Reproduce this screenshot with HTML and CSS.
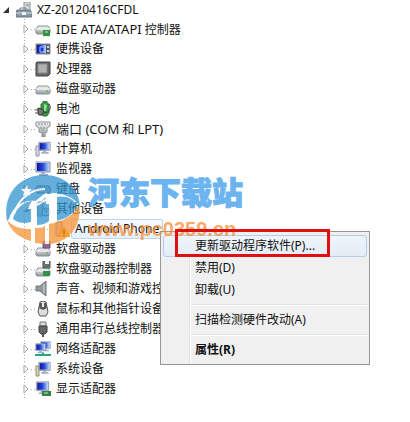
FILE: index.html
```html
<!DOCTYPE html>
<html lang="zh-CN">
<head>
    <meta charset="utf-8">
    <title>设备管理器</title>
    <link rel="stylesheet" href="styles.css">
</head>
<body>
    <svg class="defs" width="0" height="0" aria-hidden="true">
        <defs>
            <linearGradient id="metal" x2="0" y2="1"><stop stop-color="#f4f5f5"/><stop offset="1" stop-color="#929b9f"/></linearGradient>
            <linearGradient id="screen"><stop stop-color="#0718a0"/><stop offset=".5" stop-color="#2948d8"/><stop offset="1" stop-color="#b8d8ff"/></linearGradient>
            <symbol id="monitor" viewBox="0 0 16 16">
                <path d="M1 1h14v10H1z" fill="#c8ccdc" stroke="#8c93a9"/>
                <path d="M2 2h12v8H2z" fill="url(#screen)"/>
                <path d="M6 11h4v2h3v2H4v-2h2z" fill="#a7adc2"/>
            </symbol>
            <symbol id="drive" viewBox="0 0 16 16">
                <path d="M3 5h10l2 3v4l-1 1H2l-1-1V8z" fill="url(#metal)" stroke="#8b9295"/>
                <path d="M1 8h14" stroke="#fff"/>
                <path d="M11 9h2v2h-2z" fill="#74bd64"/>
            </symbol>
            <symbol id="arrow" viewBox="0 0 8 10">
                <path d="M2 1l4 4-4 4z" fill="#fff" stroke="#a5a5a5"/>
            </symbol>
        </defs>
    </svg>

    <main class="manager">
        <div class="node root">
            <svg class="arrow" viewBox="0 0 8 10"><path d="M7 2v6H1z" fill="#333"/></svg>
            <svg class="icon" viewBox="0 0 16 16"><path d="M8 0h6v10H8z" fill="#d5dadd" stroke="#8d989f"/><path d="M10 3h3" stroke="#6c7c85"/><path d="M1 8h13l2 3v4H0v-4z" fill="#8998a3" stroke="#697780"/><path d="M4 8V6h6v2" fill="none" stroke="#7b858b"/><path d="M0 11h16" stroke="#d1dde3"/><path d="M6 10h4v3H6z" fill="#eef1f2"/></svg>
            <span class="label">XZ-20120416CFDL</span>
        </div>
        <ul class="tree">
            <li class="node"><svg class="arrow"><use href="#arrow"/></svg><svg class="icon" viewBox="0 0 16 16"><use href="#drive"/><path d="M8 9h7v6H8z" fill="#329343"/><path d="M10 11h3M9 15v1m3-1v1m2-1v1" stroke="#c8e0c7"/></svg><span class="label"><span class="latin">IDE ATA/ATAPI</span> 控制器</span></li>
            <li class="node"><svg class="arrow"><use href="#arrow"/></svg><svg class="icon" viewBox="0 0 16 16"><path d="M1 3h14v10H1z" fill="#525461" stroke="#8b8c98"/><path d="M2 4h9v8H2z" fill="url(#screen)"/><path d="M5 6h4v5H5z" fill="#1430d4" stroke="#a5c6ff"/><path d="M12 5h2v2h-2zm0 4h2v2h-2z" fill="#d8d9e1"/></svg><span class="label">便携设备</span></li>
            <li class="node"><svg class="arrow"><use href="#arrow"/></svg><svg class="icon" viewBox="0 0 16 16"><path d="M1 2l1-1h13v12l-2 2H1z" fill="#666" stroke="#444"/><path d="M3 3h9v9H3z" fill="#b2b2b2" stroke="#8a8a8a"/></svg><span class="label">处理器</span></li>
            <li class="node"><svg class="arrow"><use href="#arrow"/></svg><svg class="icon"><use href="#drive"/></svg><span class="label">磁盘驱动器</span></li>
            <li class="node"><svg class="arrow"><use href="#arrow"/></svg><svg class="icon" viewBox="0 0 16 16"><path d="M6 3l2-1V0h4v2l2 1v9l-2 3H8l-2-2z" fill="#2e9b42" stroke="#466c46"/><path d="M9 3l3 1-1 6H9z" fill="#9bdc91"/><path d="M0 9h4M0 12h4" stroke="#555"/><path d="M3 7l4 1 2 2-2 4H4L3 12z" fill="#777" stroke="#333"/><path d="M14 3q3 4-1 8l-4 1" fill="none" stroke="#444"/></svg><span class="label">电池</span></li>
            <li class="node"><svg class="arrow"><use href="#arrow"/></svg><svg class="icon" viewBox="0 0 16 16"><path d="M1 1h14v4l-3 2v4l-2 1v4H7v-4l-3-1V7L1 5z" fill="url(#metal)" stroke="#899197"/><path d="M3 3h10M5 7h6M8 8v4" stroke="#7c8489" stroke-dasharray="2 1"/></svg><span class="label"><span class="latin">端口 (COM</span> 和 <span class="latin">LPT)</span></span></li>
            <li class="node"><svg class="arrow"><use href="#arrow"/></svg><svg class="icon" viewBox="0 0 16 16"><path d="M1 5h3v10H1z" fill="#dcdde5" stroke="#8d91a1"/><use href="#monitor" x="3" width="13" height="14"/></svg><span class="label">计算机</span></li>
            <li class="node"><svg class="arrow"><use href="#arrow"/></svg><svg class="icon"><use href="#monitor"/></svg><span class="label">监视器</span></li>
            <li class="node"><svg class="arrow"><use href="#arrow"/></svg><svg class="icon" viewBox="0 0 16 16"><path d="M2 5h12l2 3-2 4H2L0 8z" fill="#ccc" stroke="#555"/><path d="M3 7h11M2 9h12" stroke="#555" stroke-dasharray="1 1"/></svg><span class="label">键盘</span></li>
            <li class="node"><svg class="arrow" viewBox="0 0 8 10"><path d="M7 2v6H1z" fill="#888"/></svg><svg class="icon" viewBox="0 0 16 16"><path d="M2 1h6v14H2z" fill="#c6cdd0" stroke="#6d7880"/><circle cx="11" cy="11" r="4" fill="#f4f4f4" stroke="#777"/><path d="M9 10q2-2 3 0l-1 2m0 1v1" fill="none" stroke="#456"/></svg><span class="label">其他设备</span></li>
            <li class="node child"><svg class="icon" viewBox="0 0 16 16"><path d="M2 1h6v14H2z" fill="#d3d2c6" stroke="#858477"/><path d="M10 6l6 10H4z" fill="#ffd414" stroke="#d69d00"/><path d="M10 9v4m0 1v1" stroke="#443100" stroke-width="2"/></svg><span class="label selected">Android Phone</span></li>
            <li class="node"><svg class="arrow"><use href="#arrow"/></svg><svg class="icon" viewBox="0 0 16 16"><use href="#drive" y="2"/><path d="M8 0h7v7H8z" fill="#8d6692" stroke="#705078"/><path d="M10 0h4v3h-4z" fill="#eee"/></svg><span class="label">软盘驱动器</span></li>
            <li class="node"><svg class="arrow"><use href="#arrow"/></svg><svg class="icon" viewBox="0 0 16 16"><use href="#drive" y="2"/><path d="M8 0h7v7H8z" fill="#65736d" stroke="#4c5c54"/><path d="M10 0h4v3h-4z" fill="#eee"/><path d="M8 10h7v5H8z" fill="#329343"/></svg><span class="label">软盘驱动器控制器</span></li>
            <li class="node"><svg class="arrow"><use href="#arrow"/></svg><svg class="icon" viewBox="0 0 16 16"><path d="M1 5h4l6-5v15l-6-5H1z" fill="#91999d" stroke="#70787c"/><path d="M9 3v9" stroke="#d9dee0"/></svg><span class="label">声音、视频和游戏控制器</span></li>
            <li class="node"><svg class="arrow"><use href="#arrow"/></svg><svg class="icon" viewBox="0 0 16 16"><path d="M5 1l3-1 3 1 2 10-2 4H5l-2-4z" fill="#ddd" stroke="#555"/><path d="M5 2h6l1 5-4 2-4-2z" fill="#555"/><path d="M7 2h2v4H7z" fill="#eee"/></svg><span class="label">鼠标和其他指针设备</span></li>
            <li class="node"><svg class="arrow"><use href="#arrow"/></svg><svg class="icon" viewBox="0 0 16 16"><path d="M5 1h6v4H5z" fill="#ddd" stroke="#777"/><path d="M4 5h8v6l-2 2H6l-2-2z" fill="#666" stroke="#444"/><path d="M8 13v3" stroke="#555" stroke-width="2"/></svg><span class="label">通用串行总线控制器</span></li>
            <li class="node"><svg class="arrow"><use href="#arrow"/></svg><svg class="icon" viewBox="0 0 16 16"><use href="#monitor" x="5" width="11" height="11"/><use href="#monitor" y="2" width="11" height="11"/><path d="M0 14h16M8 12v3" stroke="#26a881" stroke-width="2"/></svg><span class="label">网络适配器</span></li>
            <li class="node"><svg class="arrow"><use href="#arrow"/></svg><svg class="icon" viewBox="0 0 16 16"><path d="M1 5h3v10H1z" fill="#d9d7aa" stroke="#918f78"/><use href="#monitor" x="3" width="13" height="14"/></svg><span class="label">系统设备</span></li>
            <li class="node"><svg class="arrow"><use href="#arrow"/></svg><svg class="icon" viewBox="0 0 16 16"><use href="#monitor" width="15" height="14"/><path d="M7 10h9v5H7z" fill="#328642"/><path d="M9 12h4" stroke="#c9e1c7"/></svg><span class="label">显示适配器</span></li>
        </ul>

        <div class="menu" role="menu">
            <button class="item hover" role="menuitem">更新驱动程序软件(P)...</button>
            <button class="item" role="menuitem">禁用(D)</button>
            <button class="item" role="menuitem">卸载(U)</button>
            <hr>
            <button class="item" role="menuitem">扫描检测硬件改动(A)</button>
            <hr>
            <button class="item default" role="menuitem">属性(R)</button>
        </div>

        <div class="watermark">
            <svg class="logo" viewBox="0 0 76 72">
                <path d="M1 47C-4 20 14 1 38 1c20 0 35 13 36 31C67 23 59 20 51 20H40l-9 7C17 25 6 33 3 45z" fill="#2f93cf"/>
                <path d="M7 45c2-10 10-17 19-18l-5 8h4v13c-7 2-13 1-18-3zM31 31l9-8v7h3v17c-4 3-8 4-12 4zM50 23c9-2 18 1 21 9-3 7-10 13-21 15z" fill="#2f93cf"/>
                <path d="M31 27l9-7 3 4-12 7zM8 40c4-14 16-25 31-25" fill="none" stroke="#fff" stroke-width="2"/>
                <path d="M21 35l10-8v26h-6V35zM37 27l9-8h5v42h-8V27z" fill="#fff"/>
                <path d="M1 46c6 7 14 9 24 9v12C13 64 4 56 1 46zM29 54c4 0 7 0 10-2v18l-10-1zM43 62V50c14-2 25-9 30-19 3 20-9 36-28 39h-2z" fill="#f59235"/>
                <path d="M21 11l1 4h4l-3 3 1 4-3-2-4 2 1-4-3-3h4z" fill="#fff"/>
            </svg>
            <span class="site">河东下载站</span>
            <span class="url">www.pc0359.cn</span>
        </div>
        <div class="highlight"></div>
    </main>
</body>
</html>
```

FILE: styles.css
```css
* {
    box-sizing: border-box;
}
body {
    margin: 0;
    background: #fff;
    color: #111;
    font-family: "Noto Sans", "Noto Sans CJK SC", sans-serif;
    font-size: 12px;
}
.defs {
    position: absolute;
}
.manager {
    position: relative;
    padding-bottom: 20px;
}
.node {
    display: flex;
    align-items: center;
    height: 20px;
    white-space: nowrap;
}
.root {
    height: 19px;
    padding-left: 2px;
}
.tree {
    list-style: none;
    margin: 0 0 0 24px;
    padding: 0;
    background: repeating-linear-gradient(#aaa 0 1px, transparent 1px 3px) 0 0 / 1px 100% no-repeat;
}
.tree .node {
    margin-left: -2px;
    /* dotted connector between the arrow and the icon */
    background: repeating-linear-gradient(90deg, #aaa 0 1px, transparent 1px 3px) 9px 10px / 5px 1px no-repeat;
}
.arrow {
    width: 8px;
    height: 10px;
    flex: none;
    background: #fff;
}
.icon {
    width: 16px;
    height: 16px;
    flex: none;
    margin-left: 5px;
}
.root .icon {
    margin-left: 6px;
}
.label {
    margin-left: 3px;
    padding: 0 2px;
    line-height: 18px;
}
.latin {
    font-size: 13px;
}
.tree .child {
    padding-left: 27px;
    background: repeating-linear-gradient(90deg, #aaa 0 1px, transparent 1px 3px) 22px 10px / 9px 1px no-repeat;
}
.selected {
    margin-left: 1px;
    padding: 0 3px;
    border: 1px solid #b9d7f0;
    border-radius: 2px;
    background: linear-gradient(#f7fbff, #e4f0fb);
}
.menu {
    position: absolute;
    top: 231px;
    left: 160px;
    width: 210px;
    padding: 3px 2px;
    border: 1px solid #979797;
    background: linear-gradient(90deg, transparent 28px, #e0e0e0 28px 29px, #fff 29px 30px, transparent 30px) #f0f0f0;
}
.item {
    display: block;
    width: 100%;
    height: 22px;
    padding: 0 0 0 31px;
    border: 1px solid transparent;
    border-radius: 3px;
    background: none;
    color: #111;
    font: inherit;
    line-height: 20px;
    text-align: left;
    white-space: nowrap;
}
.hover {
    border-color: #b4cdec;
    background: linear-gradient(#f0f4fa, #e3ecf7);
}
.menu .default {
    font-weight: bold;
}
.menu hr {
    height: 2px;
    margin: 3px 0 3px 28px;
    border: 0;
    border-top: 1px solid #e0e0e0;
    border-bottom: 1px solid #fff;
}
.watermark {
    position: absolute;
    top: 174px;
    left: 6px;
    opacity: 0.75;
    pointer-events: none;
}
.logo {
    display: block;
    width: 76px;
    height: 72px;
}
.site {
    position: absolute;
    top: -2px;
    left: 82px;
    color: #3a9bec;
    font-size: 31px;
    font-weight: 900;
    line-height: 40px;
    white-space: nowrap;
    -webkit-text-stroke: 1px #3a9bec;
}
.url {
    position: absolute;
    top: 43px;
    left: 82px;
    color: #f58f38;
    font-family: "Liberation Sans", sans-serif;
    font-size: 20px;
    font-weight: bold;
    line-height: 24px;
}
.highlight {
    position: absolute;
    top: 229px;
    left: 175px;
    width: 155px;
    height: 28px;
    border: 3px solid #e01010;
}
```
